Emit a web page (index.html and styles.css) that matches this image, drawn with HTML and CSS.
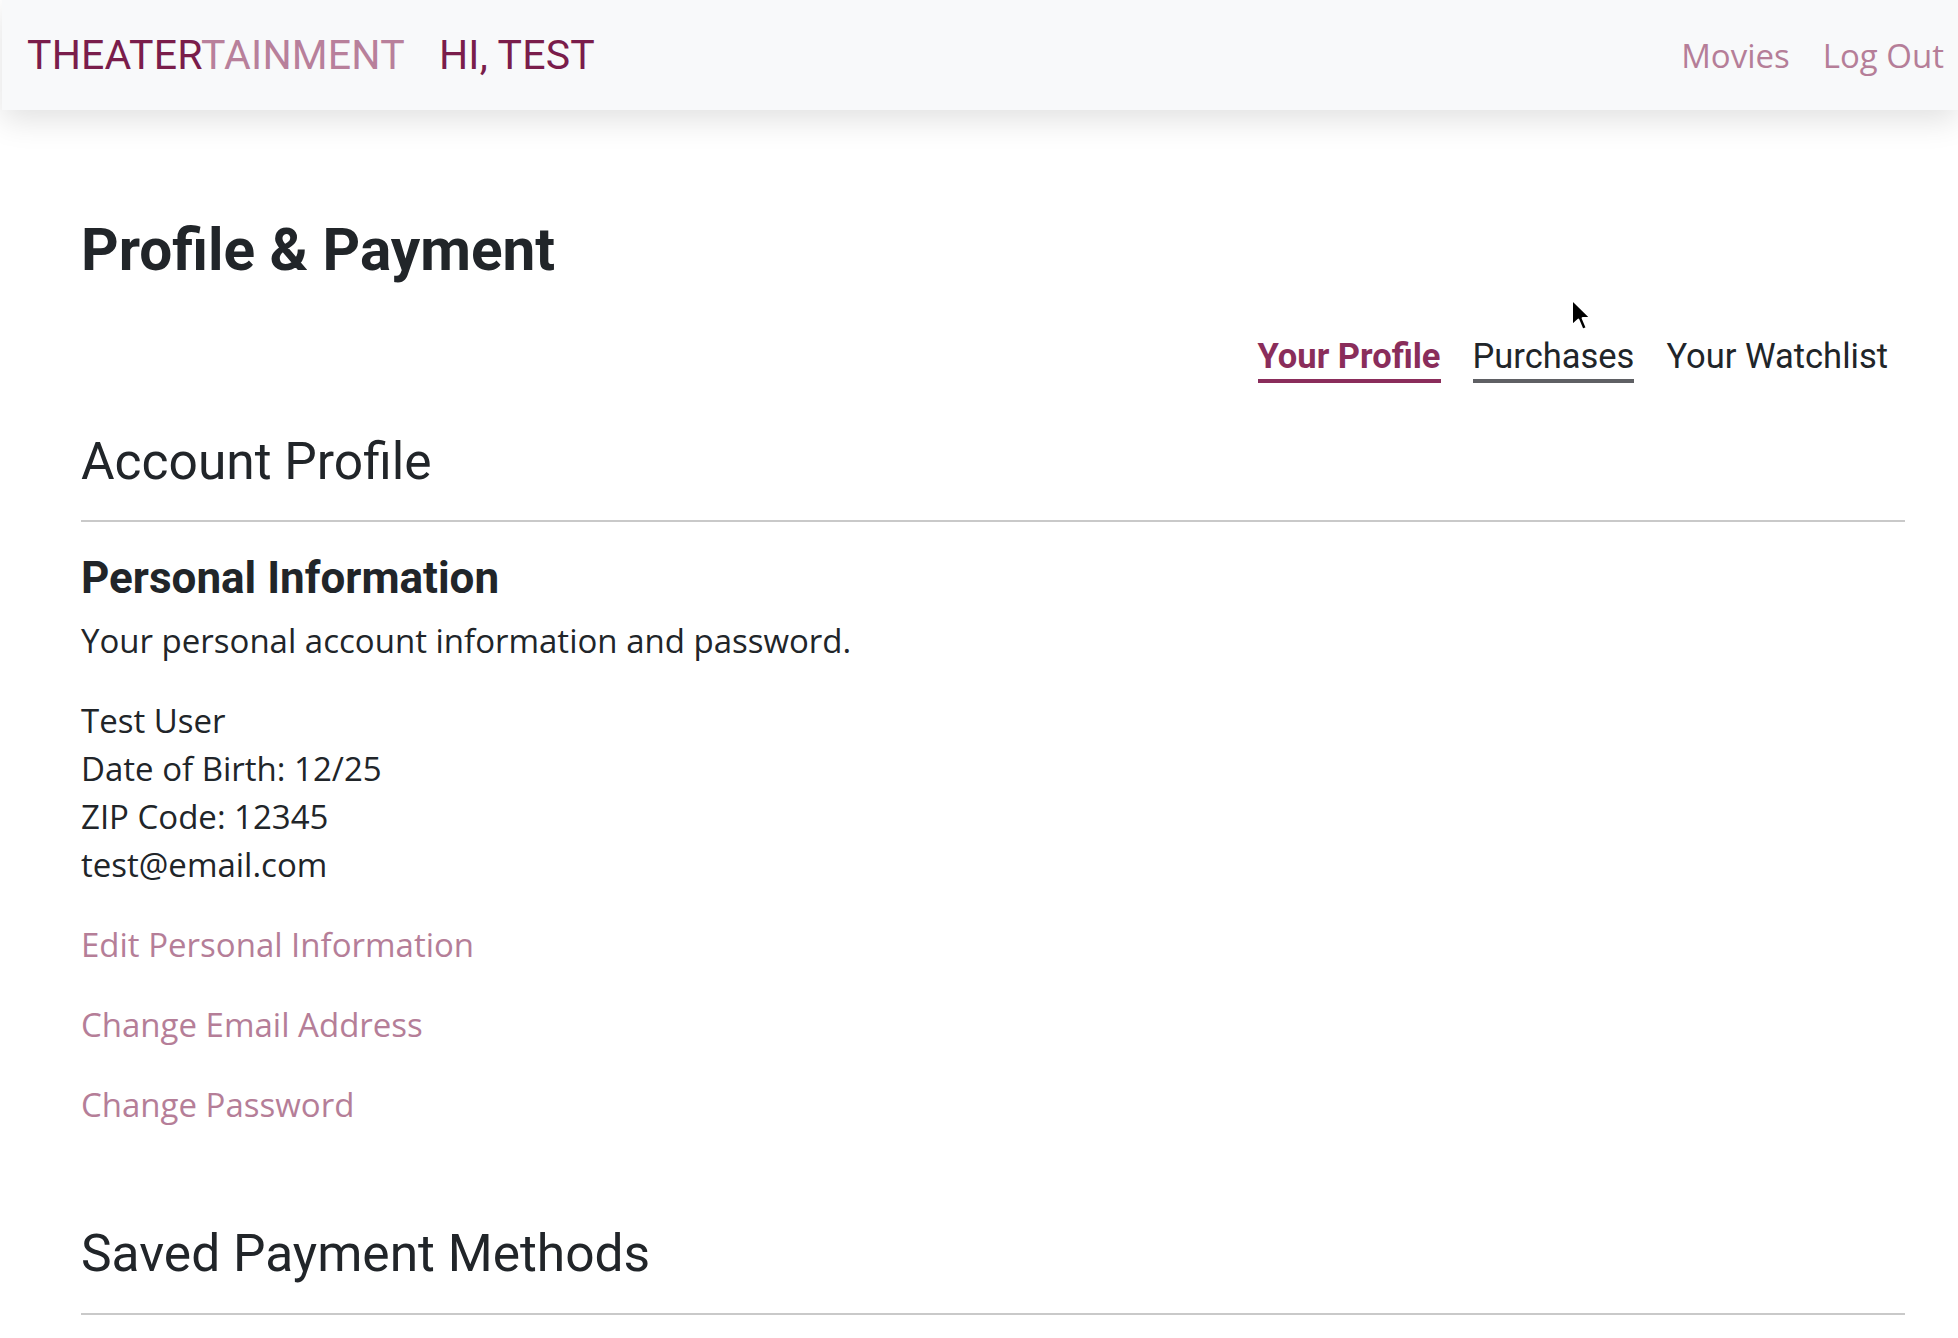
FILE: index.html
```html
<!DOCTYPE html>
<html lang="en">
<head>
<meta charset="utf-8">
<title>Profile &amp; Payment - Theatertainment</title>
<link rel="stylesheet" href="styles.css">
</head>
<body>
<header class="topbar">
  <div class="brand">
    <span class="logo"><span class="logo-dark">THEATER</span><span class="logo-light">TAINMENT</span></span>
    <span class="greeting">HI, TEST</span>
  </div>
  <nav class="topnav">
    <a href="#" class="topnav-link">Movies</a>
    <a href="#" class="topnav-link">Log Out</a>
  </nav>
</header>

<main class="page">
  <h1 class="page-title">Profile &amp; Payment</h1>

  <nav class="tabs">
    <a href="#" class="tab tab-active">Your Profile</a>
    <a href="#" class="tab tab-hover">Purchases</a>
    <a href="#" class="tab">Your Watchlist</a>
  </nav>

  <section class="section">
    <h2 class="section-title">Account Profile</h2>
    <hr class="rule">
    <h3 class="sub-title">Personal Information</h3>
    <p class="lead">Your personal account information and password.</p>
    <div class="details">
      <div>Test User</div>
      <div>Date of Birth: 12/25</div>
      <div>ZIP Code: 12345</div>
      <div>test@email.com</div>
    </div>
    <ul class="actions">
      <li><a href="#" class="action-link">Edit Personal Information</a></li>
      <li><a href="#" class="action-link">Change Email Address</a></li>
      <li><a href="#" class="action-link">Change Password</a></li>
    </ul>
  </section>

  <section class="section">
    <h2 class="section-title section-title-2">Saved Payment Methods</h2>
    <hr class="rule rule-2">
  </section>
</main>

<svg class="cursor" width="24" height="36" viewBox="0 0 22 34" aria-hidden="true">
  <path d="M1.5 1.5 L1.5 26 L7.5 20.5 L11.5 30 L15.5 28.3 L11.6 19 L19.5 19 Z" fill="#000" stroke="#fff" stroke-width="2" stroke-linejoin="round"/>
</svg>
</body>
</html>
```

FILE: styles.css
```css
html, body {
  margin: 0;
  padding: 0;
  background: #ffffff;
}

body {
  font-family: "Open Sans", "Noto Sans", sans-serif;
  color: #212529;
  overflow: hidden;
  height: 1338px;
  position: relative;
}

a {
  text-decoration: none;
}

.topbar {
  height: 110px;
  margin-left: 2px;
  background: #f8f9fa;
  box-shadow: 0 10px 30px rgba(0, 0, 0, 0.12);
  display: flex;
  align-items: center;
  justify-content: space-between;
  padding: 0 14px 0 25px;
  position: relative;
  z-index: 1;
}

.brand {
  display: flex;
  align-items: center;
  gap: 34px;
  font-family: Roboto, "Liberation Sans", sans-serif;
  font-size: 41px;
  letter-spacing: 0.2px;
}

.logo-dark,
.greeting {
  color: #7a1d4b;
}

.logo-light {
  color: #b8809b;
}

.topnav {
  display: flex;
  gap: 33px;
}

.topnav-link {
  color: #b57e98;
  font-size: 33px;
}

.page {
  padding: 108px 53px 0 81px;
}

.page-title {
  margin: 0;
  font-family: Roboto, "Liberation Sans", sans-serif;
  font-weight: 700;
  font-size: 58.5px;
  line-height: 64px;
  color: #212529;
}

.tabs {
  display: flex;
  justify-content: flex-end;
  margin-top: 54px;
  padding-right: 1px;
}

.tab {
  font-family: Roboto, "Liberation Sans", sans-serif;
  font-size: 34.5px;
  line-height: 40px;
  color: #212529;
  margin: 0 16px;
  padding-bottom: 3px;
  border-bottom: 4px solid transparent;
}

.tab-active {
  color: #8a2d5b;
  font-weight: 700;
  border-bottom-color: #8a2d5b;
}

.tab-hover {
  border-bottom-color: #5f6064;
}

.section {
  margin-top: 0;
}

.section-title {
  margin: 51px 0 0;
  font-family: Roboto, "Liberation Sans", sans-serif;
  font-weight: 400;
  font-size: 51.5px;
  line-height: 56px;
  color: #212529;
}

.section-title-2 {
  margin-top: 97px;
}

.rule {
  border: 0;
  border-top: 2px solid #c9c9c9;
  margin: 30px 0 0;
}

.rule-2 {
  margin-top: 31px;
}

.sub-title {
  margin: 30px 0 0;
  font-family: Roboto, "Liberation Sans", sans-serif;
  font-weight: 700;
  font-size: 44px;
  line-height: 52px;
}

.lead {
  margin: 13px 0 0;
  font-size: 33px;
  line-height: 48px;
}

.details {
  margin-top: 32px;
  font-size: 33px;
  line-height: 48px;
}

.actions {
  list-style: none;
  margin: 32px 0 0;
  padding: 0;
  display: flex;
  flex-direction: column;
  gap: 32px;
}

.action-link {
  color: #b57e98;
  font-size: 33px;
  line-height: 48px;
}

.cursor {
  position: absolute;
  left: 1570px;
  top: 298px;
}
```
